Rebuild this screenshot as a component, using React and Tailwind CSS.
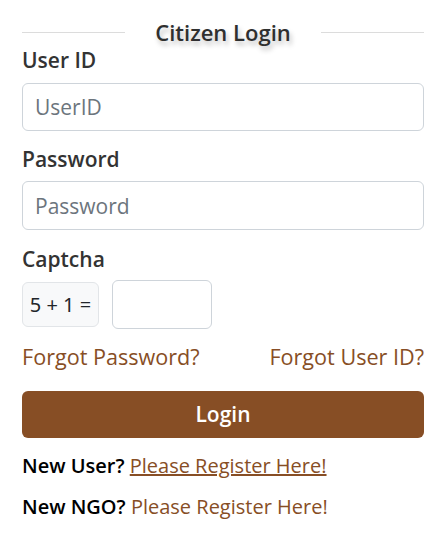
export default function App() {
  return (
    <div className="w-[448px] h-[535px] bg-white font-['Open_Sans',sans-serif] text-[#333] pl-[22px] pr-[24px] pt-[17px]">
      <div className="flex items-center h-[30px]">
        <div className="flex-1 border-t border-[#dcdcdc]" />
        <div className="px-[30px] text-[22px] font-semibold text-[#2f2f2f] [text-shadow:2px_4px_5px_rgba(0,0,0,0.25)]">
          Citizen Login
        </div>
        <div className="flex-1 border-t border-[#dcdcdc]" />
      </div>

      <label className="block text-[21px] leading-[26px] font-semibold text-[#333]">User ID</label>
      <input
        className="mt-[10px] block w-full h-[48px] rounded-md border border-[#ced4da] px-[12px] text-[21px] placeholder:text-[#6c757d] outline-none"
        placeholder="UserID"
      />

      <label className="mt-[15px] block text-[21px] leading-[26px] font-semibold text-[#333]">Password</label>
      <input
        type="password"
        className="mt-[9px] block w-full h-[49px] rounded-md border border-[#ced4da] px-[12px] text-[21px] placeholder:text-[#6c757d] outline-none"
        placeholder="Password"
      />

      <label className="mt-[16px] block text-[21px] leading-[26px] font-semibold text-[#333]">Captcha</label>
      <div className="mt-[8px] flex items-center gap-[13px]">
        <div className="h-[45px] w-[77px] flex items-center justify-center rounded-md border border-[#e2e5e8] bg-[#f8f9fa] text-[20px] text-[#212529] font-['Noto_Sans',sans-serif]">
          5 + 1 =
        </div>
        <input className="h-[49px] w-[100px] rounded-md border border-[#ced4da] px-[12px] text-[21px] outline-none" />
      </div>

      <div className="mt-[15px] flex justify-between text-[21.6px] leading-[26px] text-[#874e25]">
        <span>Forgot Password?</span>
        <span>Forgot User ID?</span>
      </div>

      <button className="mt-[21px] block w-full h-[47px] rounded-md bg-[#874e25] text-white text-[21px] font-semibold">
        Login
      </button>

      <div className="mt-[15px] text-[20px] leading-[26px]">
        <span className="font-semibold text-black">New User? </span>
        <span className="underline text-[#874e25]">Please Register Here!</span>
      </div>
      <div className="mt-[15px] text-[20px] leading-[26px]">
        <span className="font-semibold text-black">New NGO? </span>
        <span className="text-[#874e25]">Please Register Here!</span>
      </div>
    </div>
  );
}
